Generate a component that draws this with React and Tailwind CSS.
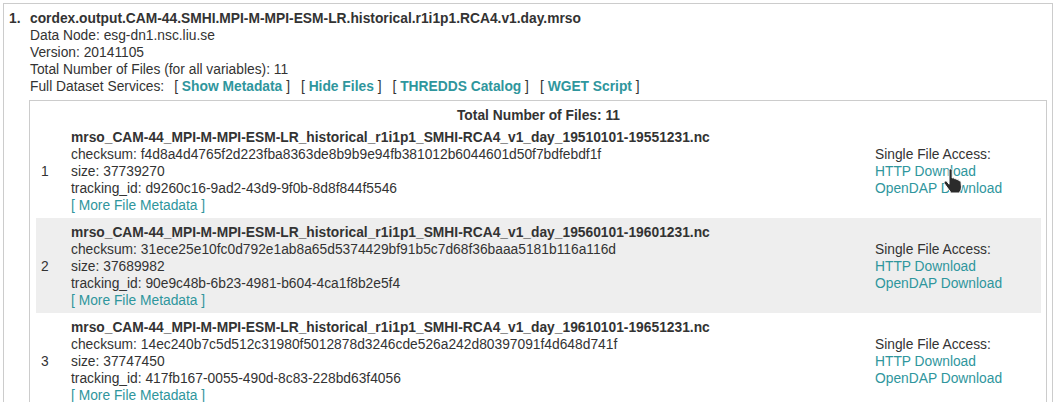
const files = [
  {
    name: "mrso_CAM-44_MPI-M-MPI-ESM-LR_historical_r1i1p1_SMHI-RCA4_v1_day_19510101-19551231.nc",
    checksum: "f4d8a4d4765f2d223fba8363de8b9b9e94fb381012b6044601d50f7bdfebdf1f",
    size: "37739270",
    tracking: "d9260c16-9ad2-43d9-9f0b-8d8f844f5546",
  },
  {
    name: "mrso_CAM-44_MPI-M-MPI-ESM-LR_historical_r1i1p1_SMHI-RCA4_v1_day_19560101-19601231.nc",
    checksum: "31ece25e10fc0d792e1ab8a65d5374429bf91b5c7d68f36baaa5181b116a116d",
    size: "37689982",
    tracking: "90e9c48b-6b23-4981-b604-4ca1f8b2e5f4",
  },
  {
    name: "mrso_CAM-44_MPI-M-MPI-ESM-LR_historical_r1i1p1_SMHI-RCA4_v1_day_19610101-19651231.nc",
    checksum: "14ec240b7c5d512c31980f5012878d3246cde526a242d80397091f4d648d741f",
    size: "37747450",
    tracking: "417fb167-0055-490d-8c83-228bd63f4056",
  },
];

const linkCls = "text-[#2f969d] cursor-pointer";

const Service = ({ label }) => (
  <span className="ml-[11px]">
    [ <a className={`${linkCls} font-bold`}>{label}</a> ]
  </span>
);

// hand pointer drawn over the first HTTP Download link
const HandCursor = () => (
  <svg
    className="absolute left-[943px] top-[168px]"
    width="22"
    height="26"
    viewBox="0 0 22 26"
  >
    <path
      d="M6 2.5c0-1 .7-1.7 1.6-1.7S9.2 1.5 9.2 2.5V10l.6-.1c.9-.2 1.7.3 2 1 .9-.4 1.9 0 2.2.8.9-.3 1.9.2 2.1 1.1.9-.2 1.8.4 1.9 1.3l.4 4.2c.2 2.2-.4 4.1-1.6 5.6V25H7.2v-1.6c-1-1.2-2.3-2.8-3.4-4.4L1.4 15.6c-.6-.9-.3-2 .6-2.4.8-.4 1.7-.1 2.2.6L6 16.2z"
      fill="#2b2b2b"
      stroke="#fff"
      strokeWidth="1"
      strokeLinejoin="round"
    />
  </svg>
);

export default function App() {
  return (
    <div className="relative bg-white text-[#333] text-[13.8px] leading-[17px] font-['Liberation_Sans',Arial,sans-serif] h-[402px] overflow-hidden">
      <div className="ml-[3px] mt-[3px] w-[1050px] h-[420px] border border-[#ccc] pl-[5px] pt-[6px]">
        <div className="flex font-bold">
          <span className="w-[21px]">1.</span>
          <span>cordex.output.CAM-44.SMHI.MPI-M-MPI-ESM-LR.historical.r1i1p1.RCA4.v1.day.mrso</span>
        </div>
        <div className="pl-[21px]">
          <div>Data Node: esg-dn1.nsc.liu.se</div>
          <div>Version: 20141105</div>
          <div>Total Number of Files (for all variables): 11</div>
          <div>
            Full Dataset Services:
            <span className="ml-[-1px]" />
            <Service label="Show Metadata" />
            <Service label="Hide Files" />
            <Service label="THREDDS Catalog" />
            <Service label="WGET Script" />
          </div>
        </div>

        <div className="ml-[20px] mt-[5px] w-[1018px] h-[320px] border border-[#ccc] pl-[6px] pr-[5px] pt-[5px]">
          <div className="h-[17px] pt-[1px] text-center font-bold">Total Number of Files: 11</div>
          {files.map((f, i) => (
            <div
              key={f.name}
              className={`flex items-center h-[95px] ${i % 2 === 1 ? "bg-[#eeeeee]" : ""}`}
            >
              <div className="w-[30px] pl-[5px] pt-[2px]">{i + 1}</div>
              <div className="flex-1 px-[5px] pt-[2px]">
                <div className="font-bold">{f.name}</div>
                <div>checksum: {f.checksum}</div>
                <div>size: {f.size}</div>
                <div>tracking_id: {f.tracking}</div>
                <a className={linkCls}>[ More File Metadata ]</a>
              </div>
              <div className="w-[171px] px-[5px] pt-[2px]">
                <div>Single File Access:</div>
                <div><a className={linkCls}>HTTP Download</a></div>
                <div><a className={linkCls}>OpenDAP Download</a></div>
              </div>
            </div>
          ))}
        </div>
      </div>
      <HandCursor />
    </div>
  );
}
